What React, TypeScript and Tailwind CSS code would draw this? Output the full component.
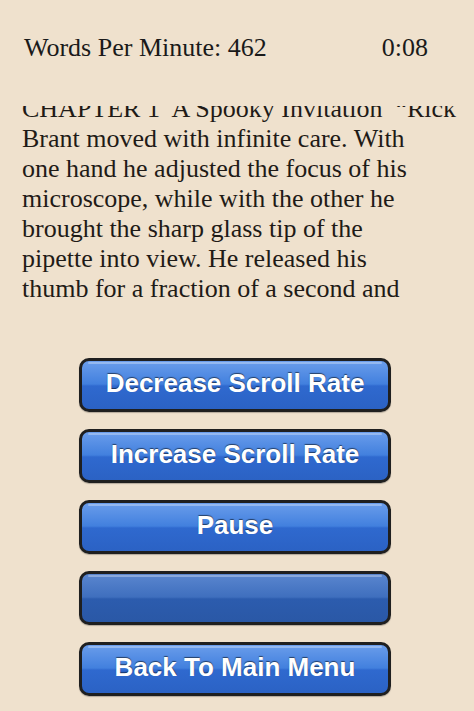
const serif = { fontFamily: '"Liberation Serif", "Times New Roman", serif' };

const lines = [
  "CHAPTER 1  A Spooky Invitation  \u201cRick",
  "Brant moved with infinite care. With",
  "one hand he adjusted the focus of his",
  "microscope, while with the other he",
  "brought the sharp glass tip of the",
  "pipette into view. He released his",
  "thumb for a fraction of a second and",
];

function GlossButton({ label, dim = false }: { label?: string; dim?: boolean }) {
  return (
    <button
      className={
        "relative w-[312px] h-[54px] rounded-[10px] border-[3px] border-[#1f1f1f] overflow-hidden shadow-[0_1px_1px_rgba(0,0,0,0.25)] " +
        (dim
          ? "bg-[linear-gradient(to_bottom,#5a86cf_0%,#3f6fbe_48%,#2c5cae_52%,#2a58a6_100%)]"
          : "bg-[linear-gradient(to_bottom,#6a9deb_0%,#4280de_48%,#2f69cf_52%,#2b62c4_100%)]")
      }
    >
      <span className="absolute left-[6px] right-[6px] top-[1px] h-[2px] rounded-full bg-white/30" />
      {label && (
        <span
          className="relative -top-[1px] text-white font-bold text-[26px] leading-none [text-shadow:0_-1px_1px_rgba(0,0,0,0.55)]"
          style={{ fontFamily: '"Liberation Sans", Arial, sans-serif' }}
        >
          {label}
        </span>
      )}
    </button>
  );
}

export default function App() {
  return (
    <div className="w-[474px] h-[711px] bg-[#efe1cd] overflow-hidden flex flex-col" style={serif}>
      <div className="flex justify-between pl-[24px] pr-[46px] pt-[33px] h-[63px] text-[26px] leading-[30px] text-[#1a1a1a]">
        <span>Words Per Minute: 462</span>
        <span>0:08</span>
      </div>

      <div className="mt-[43px] h-[204px] overflow-hidden pl-[22px]">
        <div className="-mt-[12px] text-[26px] leading-[30px] text-[#1f1b17]">
          {lines.map((l) => (
            <div key={l} className="whitespace-pre">
              {l}
            </div>
          ))}
        </div>
      </div>

      <div className="mt-[48px] flex flex-col items-start pl-[79px] gap-[17px]">
        <GlossButton label="Decrease Scroll Rate" />
        <GlossButton label="Increase Scroll Rate" />
        <GlossButton label="Pause" />
        <GlossButton dim />
        <GlossButton label="Back To Main Menu" />
      </div>
    </div>
  );
}
